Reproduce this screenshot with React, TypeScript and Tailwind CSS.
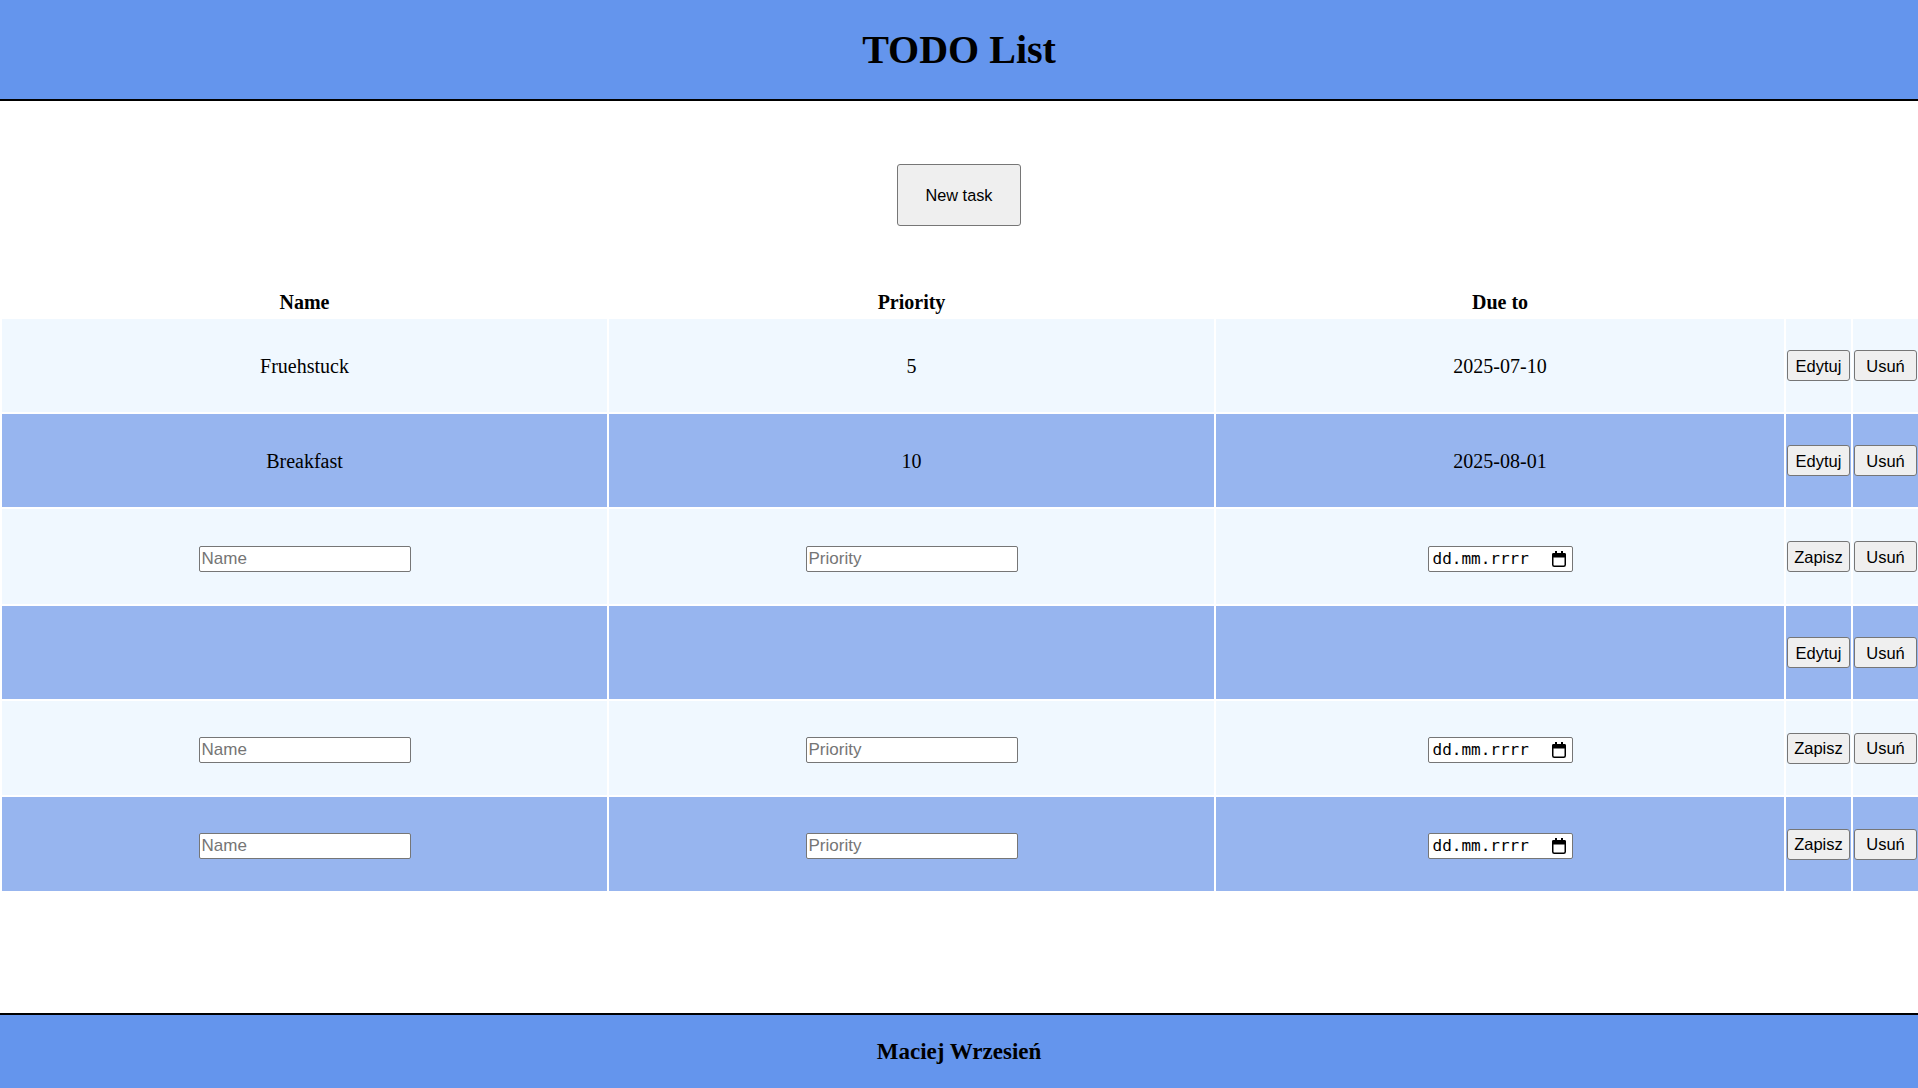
import React from "react";

type Row =
  | { kind: "view"; name: string; priority: string; due: string; h: string }
  | { kind: "edit"; h: string };

const rows: Row[] = [
  { kind: "view", name: "Fruehstuck", priority: "5", due: "2025-07-10", h: "h-[93px]" },
  { kind: "view", name: "Breakfast", priority: "10", due: "2025-08-01", h: "h-[93px]" },
  { kind: "edit", h: "h-[95px]" },
  { kind: "view", name: "", priority: "", due: "", h: "h-[93px]" },
  { kind: "edit", h: "h-[94px]" },
  { kind: "edit", h: "h-[94px]" },
];

function Btn({ children }: { children: React.ReactNode }) {
  return (
    <button className="w-full h-[31px] bg-[#efefef] border border-[#767676] rounded-[3px] text-[16.5px] text-black font-['Liberation_Sans',Arial,sans-serif] leading-none">
      {children}
    </button>
  );
}

function TextInput({ placeholder }: { placeholder: string }) {
  return (
    <input
      placeholder={placeholder}
      className="w-[212px] h-[26px] bg-white border border-[#767676] rounded-[2px] px-[2px] text-[17px] text-black placeholder:text-[#757575] font-['Liberation_Sans',Arial,sans-serif] outline-none align-middle"
    />
  );
}

function CalendarIcon() {
  return (
    <svg width="14" height="16" viewBox="0 0 14 16" className="shrink-0">
      <rect x="3" y="0" width="2" height="3" fill="#000" />
      <rect x="9" y="0" width="2" height="3" fill="#000" />
      <rect x="0.75" y="2.75" width="12.5" height="12.5" rx="1.5" fill="none" stroke="#000" strokeWidth="1.5" />
      <rect x="0" y="2" width="14" height="4.5" rx="1.5" fill="#000" />
    </svg>
  );
}

function DateInput() {
  return (
    <div className="inline-flex w-[145px] h-[26px] bg-white border border-[#767676] rounded-[2px] items-center justify-between pl-[4px] pr-[6px] align-middle">
      <span className="text-[16px] leading-none text-black font-['DejaVu_Sans_Mono',monospace]">dd.mm.rrrr</span>
      <CalendarIcon />
    </div>
  );
}

export default function App() {
  return (
    <div className="h-screen flex flex-col bg-white font-['Liberation_Serif','Times_New_Roman',serif] text-black">
      <header className="h-[101px] shrink-0 bg-[#6495ed] border-b-2 border-black flex items-center justify-center">
        <h1 className="text-[40px] font-bold leading-none">TODO List</h1>
      </header>

      <main className="flex-1 flex flex-col pt-[63px]">
        <div className="flex justify-center">
          <button className="w-[124px] h-[62px] bg-[#efefef] border border-[#767676] rounded-[3px] text-[16.3px] font-['Liberation_Sans',Arial,sans-serif] text-black">
            New task
          </button>
        </div>

        <div className="w-full overflow-hidden mt-[59px]">
          <table className="w-[1920px] table-fixed border-separate border-spacing-[2px] text-[20px]">
            <colgroup>
              <col className="w-[605px]" />
              <col className="w-[605px]" />
              <col className="w-[568px]" />
              <col className="w-[65px]" />
              <col className="w-[65px]" />
            </colgroup>
            <thead>
              <tr className="h-[25px]">
                <th className="p-0 font-bold text-center align-middle">Name</th>
                <th className="p-0 font-bold text-center align-middle">Priority</th>
                <th className="p-0 font-bold text-center align-middle">Due to</th>
                <th className="p-0"></th>
                <th className="p-0"></th>
              </tr>
            </thead>
            <tbody>
              {rows.map((r, i) => {
                const bg = i % 2 === 0 ? "bg-[#f0f8ff]" : "bg-[#97b5ef]";
                const cell = `${bg} p-[1px] text-center align-middle`;
                return (
                  <tr key={i} className={r.h}>
                    {r.kind === "view" ? (
                      <>
                        <td className={cell}>{r.name}</td>
                        <td className={cell}>{r.priority}</td>
                        <td className={cell}>{r.due}</td>
                        <td className={cell}>
                          <Btn>Edytuj</Btn>
                        </td>
                      </>
                    ) : (
                      <>
                        <td className={cell}>
                          <TextInput placeholder="Name" />
                        </td>
                        <td className={cell}>
                          <TextInput placeholder="Priority" />
                        </td>
                        <td className={cell}>
                          <DateInput />
                        </td>
                        <td className={cell}>
                          <Btn>Zapisz</Btn>
                        </td>
                      </>
                    )}
                    <td className={cell}>
                      <Btn>Usuń</Btn>
                    </td>
                  </tr>
                );
              })}
            </tbody>
          </table>
        </div>
      </main>

      <footer className="h-[75px] shrink-0 bg-[#6495ed] border-t-2 border-black flex items-center justify-center">
        <h3 className="text-[23px] font-bold leading-none">Maciej Wrzesień</h3>
      </footer>
    </div>
  );
}
